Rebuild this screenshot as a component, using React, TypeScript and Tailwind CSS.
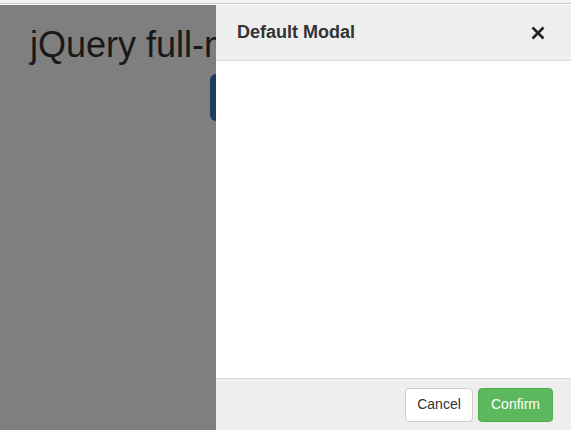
export default function App() {
  return (
    <div className="relative h-[430px] w-[571px] overflow-hidden bg-white font-['Liberation_Sans',Arial,sans-serif]">
      <div className="h-[4px] border-b border-[#c8c8c8] bg-[#f4f4f4]" />

      {/* page behind the modal, clipped where the panel covers it */}
      <div className="w-[216px] overflow-hidden pl-[30px] pt-[17px]">
        <h1 className="whitespace-nowrap text-[36px] leading-[48px] text-[#333]">jQuery full-modal Plugin Demo</h1>
        <div className="mt-[5px] flex pl-[180px]">
          <button className="h-[47px] w-[160px] shrink-0 rounded-[6px] bg-[#337ab7] text-[18px] text-white"></button>
        </div>
      </div>

      {/* backdrop */}
      <div className="absolute inset-x-0 bottom-0 top-[5px] bg-black/50" />

      {/* side modal */}
      <div className="absolute bottom-0 right-0 top-[5px] flex w-[355px] flex-col bg-white">
        <div className="flex h-[56px] items-center justify-between border-b border-[#dcdcdc] bg-[#eeeeee] pl-[21px] pr-[26px]">
          <h2 className="text-[18px] font-bold text-[#333]">Default Modal</h2>
          <button className="text-[#222]">
            <svg width="14" height="14" viewBox="0 0 14 14">
              <path d="M1.5 1.5 L12.5 12.5 M12.5 1.5 L1.5 12.5" stroke="currentColor" strokeWidth="2.6" strokeLinecap="butt" />
            </svg>
          </button>
        </div>
        <div className="flex-1" />
        <div className="flex h-[52px] items-center justify-end gap-[5px] border-t border-[#d8d8d8] bg-[#eeeeee] pr-[18px]">
          <button className="h-[34px] w-[68px] rounded-[4px] border border-[#ccc] bg-white text-[14px] text-[#333]">Cancel</button>
          <button className="h-[34px] w-[75px] rounded-[4px] border border-[#4cae4c] bg-[#5cb85c] text-[14px] text-white">Confirm</button>
        </div>
      </div>
    </div>
  );
}
